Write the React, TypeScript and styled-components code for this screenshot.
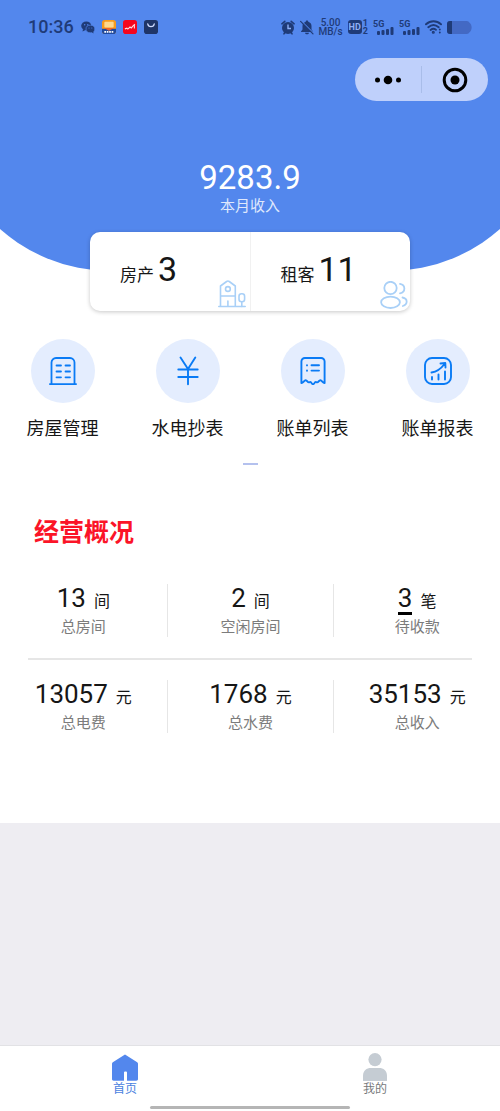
import React from "react";
import styled, { createGlobalStyle } from "styled-components";

const color = {
  brand: "#5387ed",
  navy: "#1f3b78",
  link: "#0a7bf5",
  tint: "#e4edfe",
  ink: "#161616",
  muted: "#7c7c7c",
  rule: "#e6e6e6",
  alert: "#fb1428",
};

const Global = createGlobalStyle`
  *, *::before, *::after { box-sizing: border-box; }
  body {
    margin: 0;
    background: #eeedf2;
    color: ${color.ink};
    font-family: Roboto, "Noto Sans CJK SC", sans-serif;
  }
  button { font: inherit; color: inherit; background: none; border: 0; padding: 0; cursor: pointer; }
  a { color: inherit; text-decoration: none; }
  h1, h2, p, dl, dd, dt { margin: 0; font-weight: 400; }
  svg { display: block; flex: none; }
`;

const Page = styled.div`
  min-height: 100vh;
  display: flex;
  flex-direction: column;
`;

const Sheet = styled.main`
  position: relative;
  isolation: isolate;
  overflow: hidden;
  background: #fff;
  padding-bottom: 90px;

  /* blue backdrop with rounded lower corners that run past both screen edges */
  &::before {
    content: "";
    position: absolute;
    z-index: -1;
    top: 0;
    left: -57px;
    right: -57px;
    height: 271px;
    border-radius: 0 0 168px 168px;
    background: ${color.brand};
  }
`;

const StatusBar = styled.header`
  display: flex;
  align-items: center;
  justify-content: space-between;
  height: 54px;
  padding: 0 28px;
  color: ${color.navy};
`;

const StatusGroup = styled.div<{ $gap: number }>`
  display: flex;
  align-items: center;
  gap: ${(p) => p.$gap}px;
`;

const Clock = styled.time`
  font-size: 18px;
  line-height: 24px;
  font-weight: 500;
`;

const Speed = styled.span`
  display: flex;
  flex-direction: column;
  font-size: 10px;
  line-height: 9px;
  font-weight: 500;
  text-align: center;
`;

const CapsuleRow = styled.div`
  display: flex;
  justify-content: flex-end;
  padding: 4px 12px 0;
`;

const Capsule = styled.div`
  display: flex;
  align-items: center;
  width: 133px;
  height: 43px;
  border-radius: 22px;
  background: #bfd0fb;
`;

const CapsuleButton = styled.button`
  flex: 1;
  height: 27px;
  display: grid;
  place-items: center;
  color: #000;
  & + & { border-left: 1px solid #a9bde9; }
`;

const Income = styled.section`
  margin-top: 59px;
  text-align: center;
  color: #fff;
`;

const IncomeValue = styled.p`
  font-size: 33px;
  line-height: 36px;
`;

const IncomeLabel = styled.p`
  font-size: 15px;
  line-height: 20px;
  color: #dfe8fc;
`;

const SummaryCard = styled.section`
  display: flex;
  width: 64%;
  height: 79px;
  margin: 16px auto 0;
  border-radius: 10px;
  background: #fff;
  box-shadow: 0 1px 4px rgba(0, 0, 0, 0.22);
`;

const SummaryItem = styled.button`
  flex: 1;
  display: flex;
  align-items: flex-end;
  justify-content: space-between;
  padding: 0 2px 2px 30px;
  & + & { border-left: 1px solid #f1f1f1; }
`;

const SummaryText = styled.span`
  display: flex;
  align-items: baseline;
  gap: 4px;
  padding-bottom: 14px;
  font-size: 17px;
  line-height: 40px;
`;

const SummaryCount = styled.span`
  font-size: 34px;
`;

const Menu = styled.nav`
  display: grid;
  grid-template-columns: repeat(4, 1fr);
  margin-top: 28px;
`;

const MenuButton = styled.button`
  display: flex;
  flex-direction: column;
  align-items: center;
  gap: 14px;
  font-size: 18px;
  line-height: 24px;
`;

const MenuDisc = styled.span`
  display: grid;
  place-items: center;
  width: 64px;
  height: 64px;
  border-radius: 50%;
  background: ${color.tint};
  color: ${color.link};
`;

const PageMark = styled.div`
  width: 15px;
  height: 2px;
  margin: 22px auto 0;
  background: #b4c1ee;
`;

const Title = styled.h2`
  margin-top: 50px;
  padding: 0 34px;
  font-size: 25px;
  line-height: 36px;
  font-weight: 700;
  color: ${color.alert};
`;

const Stats = styled.dl`
  display: grid;
  grid-template-columns: repeat(3, 1fr);
`;

const Overview = styled.section`
  margin-top: 33px;
`;

const Stat = styled.div`
  display: flex;
  flex-direction: column-reverse;
  align-items: center;
  gap: 5px;
  & + & { border-left: 1px solid ${color.rule}; }
`;

const StatLabel = styled.dt`
  font-size: 15px;
  line-height: 20px;
  color: ${color.muted};
`;

const StatValue = styled.dd`
  display: flex;
  align-items: baseline;
  gap: 8px;
  height: 28px;
  font-size: 26px;
  line-height: 28px;
`;

const StatUnit = styled.span`
  font-size: 16px;
  line-height: 20px;
`;

const PendingLink = styled.a`
  box-shadow: 0 3px 0 #000;
`;

const Rule = styled.hr`
  height: 2px;
  margin: 21px 28px 20px;
  border: 0;
  background: ${color.rule};
`;

const TabBar = styled.footer`
  margin-top: auto;
  padding: 7px 0 2px;
  background: #fff;
  border-top: 1px solid #e2e2e5;
`;

const Tabs = styled.nav`
  display: grid;
  grid-template-columns: 1fr 1fr;
`;

const Tab = styled.a<{ $active?: boolean }>`
  display: flex;
  flex-direction: column;
  align-items: center;
  font-size: 12px;
  line-height: 16px;
  color: ${(p) => (p.$active ? "#4a7fe0" : "#77797c")};
`;

const HomeIndicator = styled.div`
  width: 40%;
  height: 3px;
  margin: 9px auto 0;
  border-radius: 2px;
  background: #b5b5b5;
`;

const WechatIcon = () => (
  <svg width="14" height="13" viewBox="0 0 14 13" fill="currentColor">
    <ellipse cx="5.3" cy="4.8" rx="5.1" ry="4.4" />
    <path d="M2 8 1.5 10.6 4.5 9z" />
    <ellipse cx="9.4" cy="8" rx="4.4" ry="3.8" stroke={color.brand} strokeWidth=".7" />
    <path d="m10.5 11 2 1.4-.3-2.4z" />
    <g fill={color.brand}>
      <circle cx="3.7" cy="3.7" r=".7" />
      <circle cx="6.8" cy="3.7" r=".7" />
      <circle cx="8" cy="7" r=".5" />
      <circle cx="10.8" cy="7" r=".5" />
    </g>
  </svg>
);

const OrangeAppIcon = () => (
  <svg width="14" height="14" viewBox="0 0 15 15">
    <rect width="15" height="15" rx="3" fill="#f99b1c" />
    <rect x="2.5" y="2" width="10" height="6" rx="1" fill="#ffd88e" />
    <path d="M0 9.5h15V12a3 3 0 0 1-3 3H3a3 3 0 0 1-3-3z" fill="#20499d" />
    <path d="M2 8.5h11l-5.5 3z" fill="#f0642b" />
    <path d="M2.5 12.8h10" stroke="#fff" strokeWidth="1.8" strokeDasharray="1.8 .8" />
  </svg>
);

const RedAppIcon = () => (
  <svg width="14" height="14" viewBox="0 0 15 15">
    <rect width="15" height="15" rx="3" fill="#f5061d" />
    <path d="m2 9.500 2.200-.8 1 1L7.500 7.500l1.400 1L11 6 12.800 4.500M12.200 4.500v4.500" fill="none" stroke="#fff" strokeOpacity=".85" strokeWidth="1.200" />
  </svg>
);

const BagAppIcon = () => (
  <svg width="14" height="14" viewBox="0 0 15 15">
    <rect width="15" height="15" rx="3" fill="#1f3567" />
    <path d="M4 4.200c.6 4 6.400 4 7 0" fill="none" stroke="#cfdcff" strokeWidth="1.300" strokeLinecap="round" />
  </svg>
);

const AlarmIcon = () => (
  <svg width="14" height="15" viewBox="0 0 14 15">
    <circle cx="7" cy="8" r="6" fill="currentColor" />
    <path d="M.9 3.800 3.800 1.300M13.100 3.800l-2.900-2.500M3 13.800l1-1.200M11 13.800l-1-1.200" stroke="currentColor" strokeWidth="1.600" strokeLinecap="round" />
    <path d="M7 4.500v4h3" fill="none" stroke="#8fb0f6" strokeWidth="1.400" />
  </svg>
);

const MutedBellIcon = () => (
  <svg width="14" height="15" viewBox="0 0 14 15">
    <path d="M7 .6c.9 0 1.200.6 1.300 1.100 2 .6 3.200 2.200 3.200 4.300v3.500l1.500 2v.6H1v-.6l1.500-2V6c0-2.100 1.200-3.700 3.200-4.300C5.800 1.200 6.100.6 7 .6zM5 12.700h4c-.3 2-3.700 2-4 0z" fill="currentColor" />
    <path d="m1.200.8 12.600 12.600" stroke={color.brand} strokeWidth="1.200" />
    <path d="M.6 1.400 13 13.800" stroke="currentColor" strokeWidth="1.200" strokeLinecap="round" />
  </svg>
);

const Hd = styled.span`
  display: flex;
  align-items: center;
  gap: 1px;
  font-size: 9px;
  line-height: 8px;
  font-weight: 700;
`;

const HdBadge = styled.span`
  padding: 3px 1px;
  border-radius: 3px;
  background: ${color.navy};
  color: #8fb0f6;
`;

const HdSims = styled.span`
  display: flex;
  flex-direction: column;
`;

const Signal = styled.span`
  display: flex;
  flex-direction: column;
  width: 21px;
  font-size: 9px;
  line-height: 8px;
  font-weight: 700;
  svg { align-self: flex-end; margin-top: -1px; }
`;

const CellSignal = () => (
  <Signal>
    5G
    <svg width="17" height="8" viewBox="0 0 17 8" fill="currentColor">
      <rect x="0" y="4" width="3" height="4" rx="1" />
      <rect x="4.500" y="3" width="3" height="5" rx="1" />
      <rect x="9" y="2" width="3" height="6" rx="1" />
      <rect x="13.500" y="0" width="3" height="8" rx="1" />
    </svg>
  </Signal>
);

const WifiIcon = () => (
  <svg width="17" height="14" viewBox="0 0 17 14" fill="none" stroke="currentColor" strokeWidth="1.900" strokeLinecap="round">
    <path d="M1 4.300C5.500.2 11.500.2 16 4.300M3.300 7.200c3.200-2.800 7.200-2.800 10.400 0M5.600 10c1.800-1.500 3.700-1.500 5.300-.2" />
    <circle cx="8.300" cy="12.200" r=".6" fill="currentColor" />
    <path d="M14.800 9.500v.1M14.800 12.500v.1" />
  </svg>
);

const BatteryIcon = () => (
  <svg width="25" height="13" viewBox="0 0 25 13">
    <rect x="0" y="0" width="22.500" height="13" rx="3" fill="#4369c4" />
    <path d="M22 1.500c3.500 1.500 3.500 8.500 0 10z" fill="#4369c4" />
    <path d="M5 0v13H3a3 3 0 0 1-3-3V3a3 3 0 0 1 3-3z" fill="currentColor" />
  </svg>
);

const MoreIcon = () => (
  <svg width="28" height="10" viewBox="0 0 28 10" fill="currentColor">
    <circle cx="3.500" cy="5" r="2.500" />
    <circle cx="14" cy="5" r="4.300" />
    <circle cx="24.500" cy="5" r="2.500" />
  </svg>
);

const TargetIcon = () => (
  <svg width="26" height="26" viewBox="0 0 26 26">
    <circle cx="13" cy="13" r="10.800" fill="none" stroke="currentColor" strokeWidth="3" />
    <circle cx="13" cy="13" r="4.500" fill="currentColor" />
  </svg>
);

const HouseIcon = () => (
  <svg width="30" height="30" viewBox="0 0 30 30" fill="none" stroke="#a9d0f7" strokeWidth="1.600" strokeLinecap="round" strokeLinejoin="round">
    <path d="M.8 27.500h26.400M2.500 27.500V7L8.600 2.500a2.200 2.200 0 0 1 2.600 0L17.300 7v20.500M2.500 17h14.800M9.900 22v5.500" />
    <circle cx="9.900" cy="10" r="2.400" />
    <rect x="21" y="14.800" width="5.600" height="8" rx="2.500" />
    <path d="M23.800 23v4.500" />
  </svg>
);

const PeopleIcon = () => (
  <svg width="28" height="28" viewBox="0 0 28 28" fill="none" stroke="#a9d0f7" strokeWidth="1.800" strokeLinecap="round">
    <circle cx="10.500" cy="7" r="6.200" />
    <ellipse cx="10.500" cy="21.300" rx="9.400" ry="5.700" />
    <path d="M20 2.800c5.800 1 5.800 8.500 0 9.500M22.500 16.500c5.500 1 5.500 7 .3 8.500" />
  </svg>
);

const BuildingIcon = () => (
  <svg width="28" height="28" viewBox="0 0 28 28" fill="none" stroke="currentColor" strokeWidth="1.800" strokeLinecap="round">
    <path d="M.9 27.100h26.200M2.500 27V5.500a4.500 4.500 0 0 1 4.500-4.500h14a4.500 4.500 0 0 1 4.500 4.500V27" />
    <path d="M7.500 8.500H12M16.500 8.500H21M7.500 14.500H12M16.500 14.500H21M7.500 20.300H12M16.500 20.300H21" />
  </svg>
);

const YuanIcon = () => (
  <svg width="28" height="30" viewBox="0 0 28 30" fill="none" stroke="currentColor" strokeWidth="1.900" strokeLinecap="round" strokeLinejoin="round">
    <path d="M6.500 1.500 14 13l7.300-11.500M14 13v15.300M4.300 13.500h19.400M4.300 21h19.400" />
  </svg>
);

const ReceiptIcon = () => (
  <svg width="26" height="28" viewBox="0 0 26 28" fill="none" stroke="currentColor" strokeWidth="1.900" strokeLinecap="round" strokeLinejoin="round">
    <path d="M1.400 26V4.500A3.500 3.500 0 0 1 4.900 1h16.200a3.500 3.500 0 0 1 3.500 3.500V26c-1.800.3-2.600-2.800-4.200-2.800-1.700 0-1.800 2.200-3.200 2.200-1 0-1.300-.9-2-.2-1 1-1.200 2-2.200 2s-1.200-1-2.200-2c-.7-.7-1 .2-2 .2-1.400 0-1.500-2.200-3.200-2.200-1.600 0-2.400 3.100-4.200 2.800z" />
    <path d="M11.500 8.300H19M11.500 13.600H19M7 8.200v.2M7 13.500v.2" />
  </svg>
);

const ReportIcon = () => (
  <svg width="28" height="28" viewBox="0 0 28 28" fill="none" stroke="currentColor" strokeWidth="1.900" strokeLinecap="round" strokeLinejoin="round">
    <rect x="1" y="1" width="26" height="26" rx="7" />
    <path d="M7.500 15.500c5.500-.8 9.500-3.800 13-8.500M16.500 6.500l4.800-.5.200 4.500" />
    <path d="M8 20v2.500M14.500 17.500v5M21 14.500v8" />
  </svg>
);

const HomeTabIcon = () => (
  <svg width="28" height="28" viewBox="0 -1 28 28">
    <path d="M14 .5 26.200 8.300c.6.400.8.800.8 1.500V25c0 1.200-.6 1.700-1.700 1.700H16V18.500a1 1 0 0 0-1-1h-1a1 1 0 0 0-1 1v8.200H2.700C1.600 26.700 1 26.200 1 25V9.800c0-.7.2-1.100.8-1.500z" fill={color.brand} />
  </svg>
);

const MineTabIcon = () => (
  <svg width="26" height="28" viewBox="0 0 26 28" fill="#c5ccd3">
    <circle cx="13" cy="6.600" r="6.600" />
    <path d="M1 28v-5C1 17.500 4.500 15 9 15h8c4.500 0 8 2.500 8 8v5z" />
  </svg>
);

const menuItems = [
  { label: "房屋管理", icon: <BuildingIcon /> },
  { label: "水电抄表", icon: <YuanIcon /> },
  { label: "账单列表", icon: <ReceiptIcon /> },
  { label: "账单报表", icon: <ReportIcon /> },
];

type StatData = { label: string; value: string; unit: string; pending?: boolean };

const rooms: StatData[] = [
  { label: "总房间", value: "13", unit: "间" },
  { label: "空闲房间", value: "2", unit: "间" },
  { label: "待收款", value: "3", unit: "笔", pending: true },
];

const fees: StatData[] = [
  { label: "总电费", value: "13057", unit: "元" },
  { label: "总水费", value: "1768", unit: "元" },
  { label: "总收入", value: "35153", unit: "元" },
];

const StatRow = ({ items }: { items: StatData[] }) => (
  <Stats>
    {items.map((s) => (
      <Stat key={s.label}>
        <StatLabel>{s.label}</StatLabel>
        <StatValue>
          {s.pending ? <PendingLink href="#pending">{s.value}</PendingLink> : <span>{s.value}</span>}
          <StatUnit>{s.unit}</StatUnit>
        </StatValue>
      </Stat>
    ))}
  </Stats>
);

export default function App() {
  return (
    <Page>
      <Global />
      <Sheet>
        <StatusBar>
          <StatusGroup $gap={7}>
            <Clock>10:36</Clock>
            <WechatIcon />
            <OrangeAppIcon />
            <RedAppIcon />
            <BagAppIcon />
          </StatusGroup>
          <StatusGroup $gap={5}>
            <AlarmIcon />
            <MutedBellIcon />
            <Speed>
              <span>5.00</span>
              <span>MB/s</span>
            </Speed>
            <Hd>
              <HdBadge>HD</HdBadge>
              <HdSims>
                <span>1</span>
                <span>2</span>
              </HdSims>
            </Hd>
            <CellSignal />
            <CellSignal />
            <WifiIcon />
            <BatteryIcon />
          </StatusGroup>
        </StatusBar>

        <CapsuleRow>
          <Capsule>
            <CapsuleButton aria-label="更多"><MoreIcon /></CapsuleButton>
            <CapsuleButton aria-label="关闭"><TargetIcon /></CapsuleButton>
          </Capsule>
        </CapsuleRow>

        <Income>
          <IncomeValue>9283.9</IncomeValue>
          <IncomeLabel>本月收入</IncomeLabel>
        </Income>

        <SummaryCard>
          <SummaryItem>
            <SummaryText>房产<SummaryCount>3</SummaryCount></SummaryText>
            <HouseIcon />
          </SummaryItem>
          <SummaryItem>
            <SummaryText>租客<SummaryCount>11</SummaryCount></SummaryText>
            <PeopleIcon />
          </SummaryItem>
        </SummaryCard>

        <Menu>
          {menuItems.map((m) => (
            <MenuButton key={m.label}>
              <MenuDisc>{m.icon}</MenuDisc>
              {m.label}
            </MenuButton>
          ))}
        </Menu>
        <PageMark />

        <Title>经营概况</Title>
        <Overview>
          <StatRow items={rooms} />
          <Rule />
          <StatRow items={fees} />
        </Overview>
      </Sheet>

      <TabBar>
        <Tabs>
          <Tab href="#home" $active><HomeTabIcon />首页</Tab>
          <Tab href="#mine"><MineTabIcon />我的</Tab>
        </Tabs>
        <HomeIndicator />
      </TabBar>
    </Page>
  );
}
